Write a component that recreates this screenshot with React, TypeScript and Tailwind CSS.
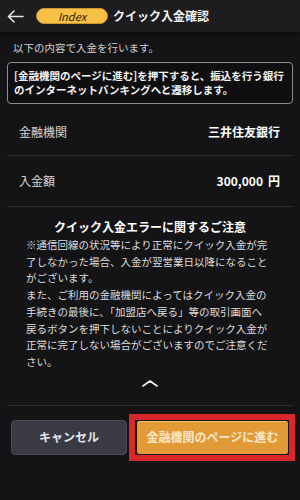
import React from "react";

const FONT = { fontFamily: '"Noto Sans CJK JP", "Noto Sans", sans-serif' };

const noticeLines = [
	"※通信回線の状況等により正常にクイック入金が完",
	"了しなかった場合、入金が翌営業日以降になること",
	"がございます。",
	"また、ご利用の金融機関によってはクイック入金の",
	"手続きの最後に、「加盟店へ戻る」等の取引画面へ",
	"戻るボタンを押下しないことによりクイック入金が",
	"正常に完了しない場合がございますのでご注意くだ",
	"さい。",
];

function BackArrow() {
	return (
		<svg width="17" height="13" viewBox="0 0 17 13" fill="none" aria-hidden="true">
			<path
				d="M1.5 6.5H16M7 1 1.5 6.5 7 12"
				stroke="#e6e6e6"
				strokeWidth="1.6"
				strokeLinecap="round"
				strokeLinejoin="round"
			/>
		</svg>
	);
}

function InfoRow({ label, value }: { label: string; value: React.ReactNode }) {
	return (
		<div className="mx-[7px] flex h-full items-center justify-between border-b border-[#2c2c2f] pl-[12px] pr-[13px]">
			<span className="text-[12px] leading-[18px] text-[#d4d4d6]">{label}</span>
			<span className="text-[12px] font-bold leading-[18px] text-white">{value}</span>
		</div>
	);
}

export default function App() {
	return (
		<div className="flex h-[500px] w-[300px] flex-col bg-[#141416]" style={FONT}>
			<header className="relative z-10 flex h-[32px] shrink-0 items-center bg-[#1d1d1f] pl-[7px] shadow-[0_2px_6px_rgba(0,0,0,0.35)]">
				<BackArrow />
				<span className="ml-[12px] flex h-[16px] w-[72px] items-center justify-center rounded-full border border-[#c99530] bg-[#f6bf45] text-[11px] italic leading-none text-[#2b2100]">
					Index
				</span>
				<h1 className="ml-[5px] text-[12px] font-bold leading-none text-[#f2f2f2]">
					クイック入金確認
				</h1>
			</header>

			<p className="mt-[8px] px-[13px] text-[10.5px] leading-[15px] text-[#cfcfd1]">
				以下の内容で入金を行います。
			</p>

			<div className="mx-[7px] mt-[7px] rounded-[4px] border border-[#8e8e92] bg-[#0f0f11] px-[6px] py-[6px] text-[10.5px] font-bold leading-[14px] text-[#f4f4f4]">
				<div>[金融機関のページに進む]を押下すると、振込を行う銀行</div>
				<div>のインターネットバンキングへと遷移します。</div>
			</div>

			<div className="mt-[4px]">
				<div className="h-[48px]">
					<InfoRow label="金融機関" value="三井住友銀行" />
				</div>
				<div className="h-[51px]">
					<InfoRow
						label="入金額"
						value={
							<>
								300,000<span className="ml-[5px]">円</span>
							</>
						}
					/>
				</div>
			</div>

			<section className="pt-[11px]">
				<h2 className="text-center text-[12px] font-bold leading-[18px] text-white">
					クイック入金エラーに関するご注意
				</h2>
				<div className="mt-[1px] px-[26px] text-[10.5px] leading-[16.7px] text-[#dcdcde]">
					{noticeLines.map((line) => (
						<div key={line} className="whitespace-nowrap">
							{line}
						</div>
					))}
				</div>
				<div className="mt-[9px] flex justify-center">
					<svg width="16" height="7" viewBox="0 0 16 7" fill="none" aria-hidden="true">
						<path d="M1 6 8 1l7 5" stroke="#f4f4f4" strokeWidth="1.6" strokeLinecap="round" strokeLinejoin="round" />
					</svg>
				</div>
			</section>

			<div className="mx-[7px] mt-[18px] border-t border-[#2c2c2f]" />

			<div className="mt-[14px] flex gap-[9px] px-[11px]">
				<button className="flex h-[35px] w-[116px] items-center justify-center rounded-[4px] border border-[#4a4a54] bg-[#3a3a44] text-[12px] font-bold text-[#e4e4e6]">
					キャンセル
				</button>
				<div className="relative">
					<button className="flex h-[35px] w-[153px] items-center justify-center rounded-[3px] border border-[#1a1108] bg-[#e29a36] text-[12px] font-bold text-[#fbe9cc] shadow-[inset_0_1px_0_rgba(255,220,150,0.6)]">
						金融機関のページに進む
					</button>
					<div className="pointer-events-none absolute -bottom-[6px] -left-[7px] -right-[6px] -top-[6px] border-[6px] border-[#d8282c]" />
				</div>
			</div>
		</div>
	);
}
